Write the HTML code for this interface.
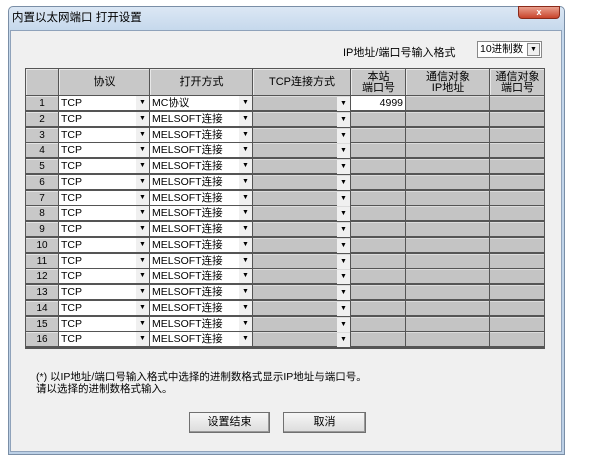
<!DOCTYPE html>
<html><head><meta charset="utf-8"><style>
*{margin:0;padding:0;box-sizing:border-box}
body{width:604px;height:460px;background:#fff;position:relative;overflow:hidden;font-family:"Liberation Sans","Noto Sans CJK SC",sans-serif;font-size:11px;color:#000}
.a{position:absolute}
.win{left:8px;top:6px;width:557px;height:449px;background:linear-gradient(#dbe7f4,#c5d8ec 24px,#bcd0e6);border:1px solid #7a8ea6;border-radius:5px 5px 0 0}
.body{left:10px;top:30px;width:552px;height:422px;background:#f0f0f0;border:1px solid #8fa2ba}
.tbl{left:25px;top:68px;width:520px;height:281px;background:#555}
.h{background:#c8c8c8;border-top:1px solid #e8e8e8;border-left:1px solid #e8e8e8;text-align:center;font-size:11px;line-height:11px;display:flex;align-items:center;justify-content:center}
.r{position:absolute;left:0;width:520px;height:15.75px}
.c{position:absolute;top:1px;height:14px}
.n{left:1px;width:32px;background:#c8c8c8;border-top:1px solid #e4e4e4;text-align:center;line-height:13px;font-size:10px}
.w{background:#fff;line-height:14px;padding-left:2px;font-size:10.5px}
.g{background:#c4c4c4;border-top:1px solid #dcdcdc}
.ar{position:absolute;top:0;right:0;width:13px;height:14px;background:#f0f0f0;font-size:7px;line-height:14px;text-align:center}
.p{left:34px;width:90px}.o{left:125px;width:102px}.t{left:228px;width:97px}.l{left:326px;width:54px}.ip{left:381px;width:83px}.pt{left:465px;width:54px}
.btn{height:21px;background:linear-gradient(#f6f6f6,#dcdcdc);border:1px solid #707070;box-shadow:inset -1px -1px 0 #999;text-align:center;line-height:19px;font-size:11px}
</style></head><body>
<div class="a win"></div>
<div class="a" style="left:12px;top:9px;font-size:11.5px">内置以太网端口 打开设置</div>
<div class="a" style="left:518px;top:6px;width:42px;height:13px;background:linear-gradient(#e9a08e,#c8442c);border:1px solid #8a2a1a;border-radius:0 0 4px 4px;color:#fff;font-size:9px;font-weight:bold;text-align:center;line-height:11px">x</div>
<div class="a body"></div>
<div class="a" style="left:343px;top:44px">IP地址/端口号输入格式</div>
<div class="a" style="left:477px;top:41px;width:65px;height:17px;background:#fff;border:1px solid #888;font-size:10.5px;line-height:15px;padding-left:2px">10进制数<div class="ar" style="top:1px;right:1px;height:13px;border:1px solid #888;line-height:12px">▼</div></div>
<div class="a tbl">
<div class="a h" style="left:1px;top:1px;width:32px;height:26px"></div>
<div class="a h" style="left:34px;top:1px;width:90px;height:26px">协议</div>
<div class="a h" style="left:125px;top:1px;width:102px;height:26px">打开方式</div>
<div class="a h" style="left:228px;top:1px;width:97px;height:26px">TCP连接方式</div>
<div class="a h" style="left:326px;top:1px;width:54px;height:26px">本站<br>端口号</div>
<div class="a h" style="left:381px;top:1px;width:83px;height:26px">通信对象<br>IP地址</div>
<div class="a h" style="left:465px;top:1px;width:54px;height:26px">通信对象<br>端口号</div>
<div class="r" style="top:27px"><div class="c n">1</div><div class="c w p">TCP<div class="ar">▼</div></div><div class="c w o">MC协议<div class="ar">▼</div></div><div class="c g t"><div class="ar">▼</div></div><div class="c w l" style="text-align:right;padding-right:2px">4999</div><div class="c g ip"></div><div class="c g pt"></div></div>
<div class="r" style="top:42.75px"><div class="c n">2</div><div class="c w p">TCP<div class="ar">▼</div></div><div class="c w o">MELSOFT连接<div class="ar">▼</div></div><div class="c g t"><div class="ar">▼</div></div><div class="c g l"></div><div class="c g ip"></div><div class="c g pt"></div></div>
<div class="r" style="top:58.5px"><div class="c n">3</div><div class="c w p">TCP<div class="ar">▼</div></div><div class="c w o">MELSOFT连接<div class="ar">▼</div></div><div class="c g t"><div class="ar">▼</div></div><div class="c g l"></div><div class="c g ip"></div><div class="c g pt"></div></div>
<div class="r" style="top:74.25px"><div class="c n">4</div><div class="c w p">TCP<div class="ar">▼</div></div><div class="c w o">MELSOFT连接<div class="ar">▼</div></div><div class="c g t"><div class="ar">▼</div></div><div class="c g l"></div><div class="c g ip"></div><div class="c g pt"></div></div>
<div class="r" style="top:90px"><div class="c n">5</div><div class="c w p">TCP<div class="ar">▼</div></div><div class="c w o">MELSOFT连接<div class="ar">▼</div></div><div class="c g t"><div class="ar">▼</div></div><div class="c g l"></div><div class="c g ip"></div><div class="c g pt"></div></div>
<div class="r" style="top:105.75px"><div class="c n">6</div><div class="c w p">TCP<div class="ar">▼</div></div><div class="c w o">MELSOFT连接<div class="ar">▼</div></div><div class="c g t"><div class="ar">▼</div></div><div class="c g l"></div><div class="c g ip"></div><div class="c g pt"></div></div>
<div class="r" style="top:121.5px"><div class="c n">7</div><div class="c w p">TCP<div class="ar">▼</div></div><div class="c w o">MELSOFT连接<div class="ar">▼</div></div><div class="c g t"><div class="ar">▼</div></div><div class="c g l"></div><div class="c g ip"></div><div class="c g pt"></div></div>
<div class="r" style="top:137.25px"><div class="c n">8</div><div class="c w p">TCP<div class="ar">▼</div></div><div class="c w o">MELSOFT连接<div class="ar">▼</div></div><div class="c g t"><div class="ar">▼</div></div><div class="c g l"></div><div class="c g ip"></div><div class="c g pt"></div></div>
<div class="r" style="top:153px"><div class="c n">9</div><div class="c w p">TCP<div class="ar">▼</div></div><div class="c w o">MELSOFT连接<div class="ar">▼</div></div><div class="c g t"><div class="ar">▼</div></div><div class="c g l"></div><div class="c g ip"></div><div class="c g pt"></div></div>
<div class="r" style="top:168.75px"><div class="c n">10</div><div class="c w p">TCP<div class="ar">▼</div></div><div class="c w o">MELSOFT连接<div class="ar">▼</div></div><div class="c g t"><div class="ar">▼</div></div><div class="c g l"></div><div class="c g ip"></div><div class="c g pt"></div></div>
<div class="r" style="top:184.5px"><div class="c n">11</div><div class="c w p">TCP<div class="ar">▼</div></div><div class="c w o">MELSOFT连接<div class="ar">▼</div></div><div class="c g t"><div class="ar">▼</div></div><div class="c g l"></div><div class="c g ip"></div><div class="c g pt"></div></div>
<div class="r" style="top:200.25px"><div class="c n">12</div><div class="c w p">TCP<div class="ar">▼</div></div><div class="c w o">MELSOFT连接<div class="ar">▼</div></div><div class="c g t"><div class="ar">▼</div></div><div class="c g l"></div><div class="c g ip"></div><div class="c g pt"></div></div>
<div class="r" style="top:216px"><div class="c n">13</div><div class="c w p">TCP<div class="ar">▼</div></div><div class="c w o">MELSOFT连接<div class="ar">▼</div></div><div class="c g t"><div class="ar">▼</div></div><div class="c g l"></div><div class="c g ip"></div><div class="c g pt"></div></div>
<div class="r" style="top:231.75px"><div class="c n">14</div><div class="c w p">TCP<div class="ar">▼</div></div><div class="c w o">MELSOFT连接<div class="ar">▼</div></div><div class="c g t"><div class="ar">▼</div></div><div class="c g l"></div><div class="c g ip"></div><div class="c g pt"></div></div>
<div class="r" style="top:247.5px"><div class="c n">15</div><div class="c w p">TCP<div class="ar">▼</div></div><div class="c w o">MELSOFT连接<div class="ar">▼</div></div><div class="c g t"><div class="ar">▼</div></div><div class="c g l"></div><div class="c g ip"></div><div class="c g pt"></div></div>
<div class="r" style="top:263.25px"><div class="c n">16</div><div class="c w p">TCP<div class="ar">▼</div></div><div class="c w o">MELSOFT连接<div class="ar">▼</div></div><div class="c g t"><div class="ar">▼</div></div><div class="c g l"></div><div class="c g ip"></div><div class="c g pt"></div></div>
</div>
<div class="a" style="left:36px;top:371px;font-size:10.5px;line-height:12px">(*) 以IP地址/端口号输入格式中选择的进制数格式显示IP地址与端口号。<br>请以选择的进制数格式输入。</div>
<div class="a btn" style="left:189px;top:412px;width:81px">设置结束</div>
<div class="a btn" style="left:283px;top:412px;width:83px">取消</div>
</body></html>
